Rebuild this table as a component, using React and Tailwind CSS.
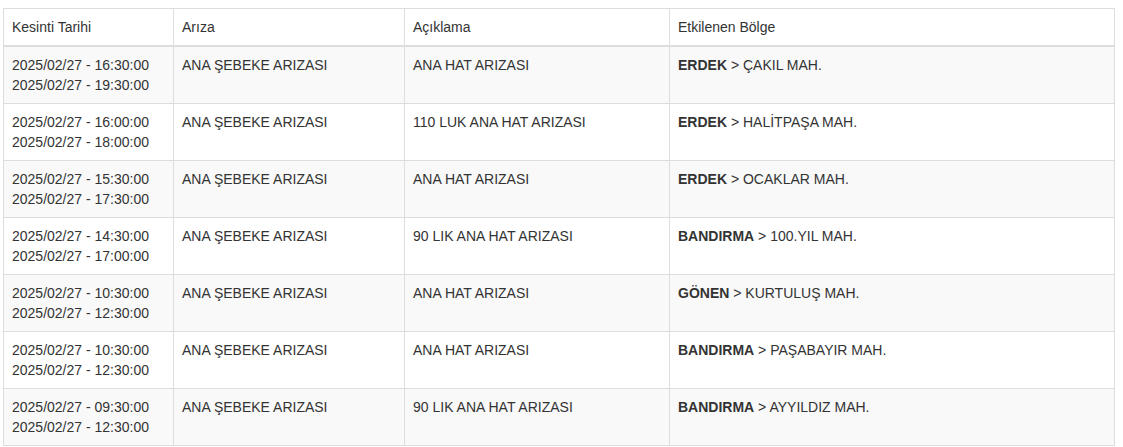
import React from 'react';

const rows = [
  ['2025/02/27 - 16:30:00', '2025/02/27 - 19:30:00', 'ANA ŞEBEKE ARIZASI', 'ANA HAT ARIZASI', 'ERDEK', 'ÇAKIL MAH.'],
  ['2025/02/27 - 16:00:00', '2025/02/27 - 18:00:00', 'ANA ŞEBEKE ARIZASI', '110 LUK ANA HAT ARIZASI', 'ERDEK', 'HALİTPAŞA MAH.'],
  ['2025/02/27 - 15:30:00', '2025/02/27 - 17:30:00', 'ANA ŞEBEKE ARIZASI', 'ANA HAT ARIZASI', 'ERDEK', 'OCAKLAR MAH.'],
  ['2025/02/27 - 14:30:00', '2025/02/27 - 17:00:00', 'ANA ŞEBEKE ARIZASI', '90 LIK ANA HAT ARIZASI', 'BANDIRMA', '100.YIL MAH.'],
  ['2025/02/27 - 10:30:00', '2025/02/27 - 12:30:00', 'ANA ŞEBEKE ARIZASI', 'ANA HAT ARIZASI', 'GÖNEN', 'KURTULUŞ MAH.'],
  ['2025/02/27 - 10:30:00', '2025/02/27 - 12:30:00', 'ANA ŞEBEKE ARIZASI', 'ANA HAT ARIZASI', 'BANDIRMA', 'PAŞABAYIR MAH.'],
  ['2025/02/27 - 09:30:00', '2025/02/27 - 12:30:00', 'ANA ŞEBEKE ARIZASI', '90 LIK ANA HAT ARIZASI', 'BANDIRMA', 'AYYILDIZ MAH.'],
];

const cell = 'border border-[#ddd] p-2 align-top text-left font-normal';

export default function App() {
  return (
    <div className="bg-white pl-[3px] pt-[8px] text-[14px] leading-5 text-[#333]" style={{ fontFamily: '"Liberation Sans", Arial, sans-serif' }}>
      <table className="w-[1112px] table-fixed border-collapse">
        <colgroup>
          <col className="w-[170px]" />
          <col className="w-[231px]" />
          <col className="w-[265px]" />
          <col />
        </colgroup>
        <thead>
          <tr>
            <th className={`${cell} border-b-2`}>Kesinti Tarihi</th>
            <th className={`${cell} border-b-2`}>Arıza</th>
            <th className={`${cell} border-b-2`}>Açıklama</th>
            <th className={`${cell} border-b-2`}>Etkilenen Bölge</th>
          </tr>
        </thead>
        <tbody>
          {rows.map((r, i) => (
            <tr key={i} className={i % 2 === 0 ? 'bg-[#f9f9f9]' : 'bg-white'}>
              <td className={cell}>
                {r[0]}
                <br />
                {r[1]}
              </td>
              <td className={cell}>{r[2]}</td>
              <td className={cell}>{r[3]}</td>
              <td className={cell}>
                <b className="font-bold">{r[4]}</b> &gt; {r[5]}
              </td>
            </tr>
          ))}
        </tbody>
      </table>
    </div>
  );
}
